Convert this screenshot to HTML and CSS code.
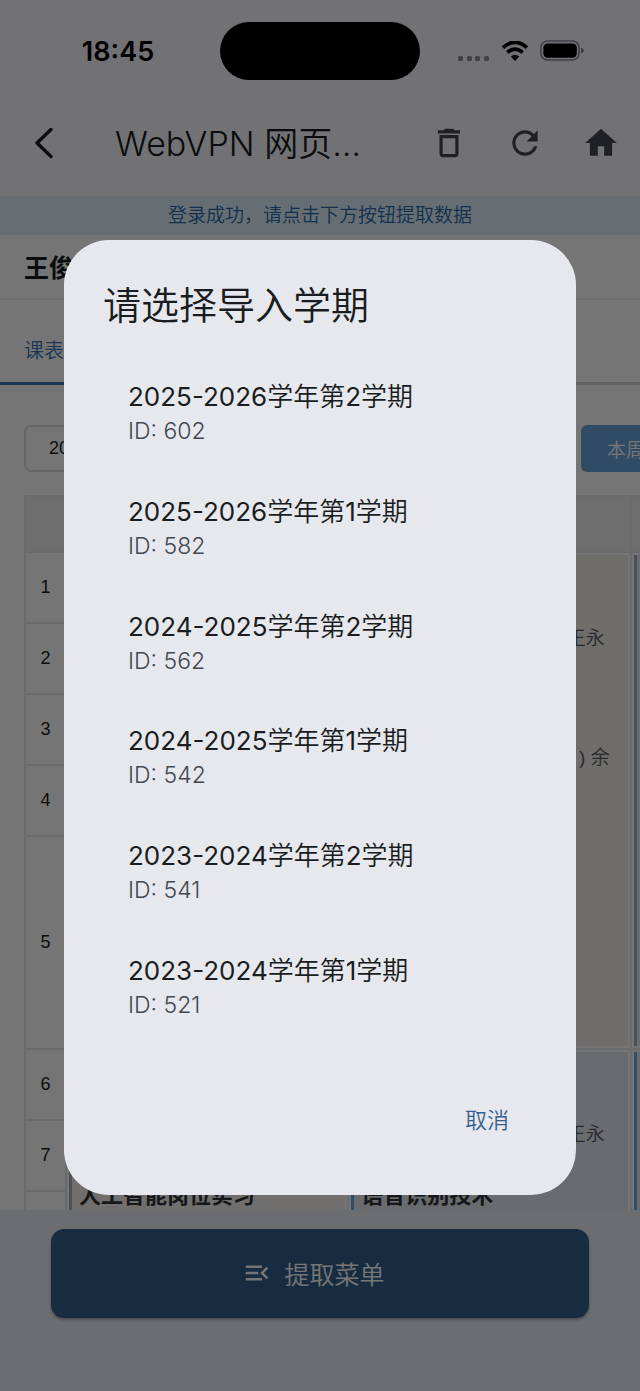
FILE: index.html
```html
<!DOCTYPE html>
<html lang="zh-CN">
<head>
<meta charset="utf-8">
<meta name="viewport" content="width=device-width, initial-scale=1">
<title>WebVPN 网页</title>
<link rel="stylesheet" href="styles.css">
</head>
<body>
<div class="app">
  <header class="top">
    <div class="status">
      <div class="status-time">18:45</div>
      <div class="island"></div>
      <div class="status-icons">
        <svg width="32" height="20" viewBox="0 0 32 20" fill="#8b9095"><rect x="0" y="15" width="5" height="5" rx="1.500"/><rect x="9" y="15" width="5" height="5" rx="1.500"/><rect x="17" y="15" width="5" height="5" rx="1.500"/><rect x="26" y="15" width="5" height="5" rx="1.500"/></svg>
        <svg width="28" height="20" viewBox="0 0 28 20"><path d="M2 6.600Q14-4 26 6.600M6.300 11.400Q14 4.800 21.700 11.400" fill="none" stroke="#000" stroke-width="3.800"/><path d="M9.800 15.600Q14 12 18.200 15.600L14 20Z"/></svg>
        <svg width="44" height="22" viewBox="0 0 44 22"><rect x="1" y="1" width="38" height="19" rx="6.500" fill="none" stroke="#8c8c95" stroke-width="1.600"/><rect x="3.400" y="3.400" width="33.400" height="14.400" rx="4.200"/><path d="M41 7.500Q44 8.500 44 10.500T41 13.500Z" fill="#8c8c95"/></svg>
      </div>
    </div>
    <div class="appbar">
      <button class="icon-btn" aria-label="返回"><svg width="38" height="38" viewBox="0 0 38 38"><path d="M26 5.500L12 19L26 32.500" fill="none" stroke="#191c20" stroke-width="3.400" stroke-linecap="round" stroke-linejoin="round"/></svg></button>
      <h1 class="appbar-title">WebVPN 网页…</h1>
      <button class="icon-btn" aria-label="删除"><svg width="38" height="38" viewBox="0 0 24 24"><path d="M6 19c0 1.100.9 2 2 2h8c1.100 0 2-.9 2-2V7H6v12zM8 9h8v10H8V9zm7.500-5l-1-1h-5l-1 1H5v2h14V4h-3.500z"/></svg></button>
      <button class="icon-btn" aria-label="刷新"><svg width="38" height="38" viewBox="0 0 24 24"><path d="M17.650 6.350C16.200 4.900 14.210 4 12 4c-4.420 0-7.990 3.580-7.990 8s3.570 8 7.990 8c3.730 0 6.840-2.550 7.730-6h-2.080c-.82 2.330-3.040 4-5.650 4-3.310 0-6-2.690-6-6s2.690-6 6-6c1.660 0 3.140.69 4.220 1.780L13 11h7V4l-2.350 2.350z"/></svg></button>
      <button class="icon-btn" aria-label="主页"><svg width="38" height="38" viewBox="0 0 24 24"><path d="M10 20v-6h4v6h5v-8h3L12 3 2 12h3v8z"/></svg></button>
    </div>
  </header>
  <p class="banner">登录成功，请点击下方按钮提取数据</p>
  <main class="web">
    <div class="student">王俊</div>
    <nav class="tabs"><a class="tab" href="#">课表</a></nav>
    <div class="filters">
      <button class="term">20</button>
      <button class="week">本周</button>
    </div>
    <div class="schedule">
      <table class="grid">
        <colgroup><col class="col-no"><col class="col-day"><col class="col-day"><col class="col-day"></colgroup>
        <thead><tr><th></th><th></th><th></th><th></th></tr></thead>
        <tbody>
          <tr><td class="no">1</td><td rowspan="5"></td>
            <td rowspan="5"><div class="card long sand"><p class="teacher">王永</p><p class="teacher second">) 余</p></div></td>
            <td rowspan="5"><div class="card long slate"></div></td></tr>
          <tr><td class="no">2</td></tr>
          <tr><td class="no">3</td></tr>
          <tr><td class="no">4</td></tr>
          <tr class="tall"><td class="no">5</td></tr>
          <tr><td class="no">6</td>
            <td rowspan="3"><div class="card stone"><p class="course">人工智能岗位实习</p></div></td>
            <td rowspan="3"><div class="card blue"><p class="teacher">王永</p><p class="course after">语音识别技术</p></div></td>
            <td rowspan="3"><div class="card blue"></div></td></tr>
          <tr><td class="no">7</td></tr>
          <tr><td class="no"></td></tr>
        </tbody>
      </table>
    </div>
  </main>
  <footer class="bottom">
    <button class="extract"><svg width="30" height="30" viewBox="0 0 24 24" fill="#fff"><path d="M3 18h13v-2H3v2zM3 13h10v-2H3v2zm0-7v2h13V6H3zm18 9.590L17.420 12 21 8.410 19.590 7l-5 5 5 5L21 15.590z"/></svg>提取菜单</button>
  </footer>
</div>
<div class="scrim">
  <section class="dialog" role="dialog" aria-modal="true" aria-labelledby="dlg">
    <h2 class="dialog-title" id="dlg">请选择导入学期</h2>
    <div class="terms">
      <button class="item"><span class="name">2025-2026学年第2学期</span><span class="id">ID: 602</span></button>
      <button class="item"><span class="name">2025-2026学年第1学期</span><span class="id">ID: 582</span></button>
      <button class="item"><span class="name">2024-2025学年第2学期</span><span class="id">ID: 562</span></button>
      <button class="item"><span class="name">2024-2025学年第1学期</span><span class="id">ID: 542</span></button>
      <button class="item"><span class="name">2023-2024学年第2学期</span><span class="id">ID: 541</span></button>
      <button class="item"><span class="name">2023-2024学年第1学期</span><span class="id">ID: 521</span></button>
    </div>
    <div class="actions"><button class="cancel">取消</button></div>
  </section>
</div>
</body>
</html>
```

FILE: styles.css
```css
* { box-sizing: border-box; }
body, h1, h2, p { margin: 0; }
body {
  font-family: Inter, "Noto Sans CJK SC DemiLight", "Noto Sans CJK SC", sans-serif;
  font-weight: 350;
  color: #191c20;
  background: #f8f9ff;
}
button { border: 0; padding: 0; background: none; font: inherit; color: inherit; }
svg { display: block; flex: none; }

.app { height: 100vh; display: flex; flex-direction: column; overflow: hidden; }
.top { background: #f8f9ff; }
.status {
  height: 90px;
  padding-top: 12px;
  display: grid;
  grid-template-columns: 1fr 200px 1fr;
  align-items: center;
}
.status-time { padding-left: 16px; text-align: center; font-size: 27px; font-weight: 600; color: #000; }
.island { height: 58px; border-radius: 29px; background: #000; }
.status-icons { display: flex; justify-content: center; align-items: center; gap: 11px; padding-right: 18px; }

.appbar { height: 106px; padding-right: 1px; display: flex; align-items: center; }
.appbar-title { flex: 1; padding: 2px 0 0 27px; font-size: 34px; font-weight: 350; line-height: 48px; white-space: nowrap; }
.icon-btn { width: 76px; height: 76px; display: grid; place-items: center; fill: #43474e; }
.icon-btn:first-child { width: 88px; }

.banner {
  background: #dfeffb;
  color: #2a6aaa;
  text-align: center;
  font-size: 19px;
  line-height: 40px;
  height: 39px;
}

.web { flex: 1; min-height: 0; overflow: hidden; background: #fff; font-family: "Liberation Sans", "Noto Sans CJK SC", sans-serif; }
.student { height: 65px; padding-left: 24px; line-height: 67px; font-size: 25px; font-weight: 700; border-bottom: 2px solid #eceef4; }
.tabs { height: 85px; padding: 16px 0 0 24px; display: flex; align-items: center; border-bottom: 3px solid #cfd3da; position: relative; }
.tab { color: #3b78b8; font-size: 20px; text-decoration: none; }
.tab::after { content: ""; position: absolute; left: 0; bottom: -3px; width: 110px; height: 3px; background: #3b78b8; }
.filters { padding: 40px 0 23px 24px; display: flex; justify-content: space-between; }
.term { width: 300px; height: 47px; border: 2px solid #dcdfe6; border-radius: 7px; padding-left: 23px; text-align: left; font-size: 18px; }
.week { width: 110px; height: 47px; margin-right: -51px; border-radius: 6px; background: #6aa5da; color: #fff; font-size: 19px; padding-left: 26px; text-align: left; }

.schedule { padding-left: 24px; overflow: hidden; }
.grid { width: 890px; table-layout: fixed; border-collapse: collapse; }
.col-no { width: 41px; }
.grid th { height: 56px; background: #efefef; }
.grid th, .grid td { border: 2px solid #e8eaee; padding: 0; }
.grid tr { height: 71px; }
.grid thead tr { height: 56px; }
.grid .tall { height: 213px; }
.grid td { vertical-align: top; }
.grid .no { text-align: center; vertical-align: middle; font-size: 18px; }
.card { height: 207px; margin: 2px; border-left: 3px solid; overflow: hidden; }
.long { height: 491px; }
.sand { background: #f0ede7; border-color: #b0a898; padding-top: 70px; }
.slate { background: #eaebf0; border-color: #a3acbd; }
.stone { background: #f5f2ee; border-color: #a8b0bc; padding-top: 128px; }
.blue { background: #e6eaf2; border-color: #66aae8; padding-top: 69px; }
.teacher { padding-right: 23px; text-align: right; font-size: 19px; line-height: 28px; color: #565c68; }
.second { padding-top: 91px; padding-right: 18px; }
.course { padding-left: 7px; font-size: 22px; line-height: 32px; font-weight: 700; color: #303338; }
.after { padding-top: 31px; }

.bottom { padding: 19px 51px 73px; background: #ebedf3; }
.extract {
  width: 100%;
  height: 89px;
  display: flex;
  align-items: center;
  justify-content: center;
  gap: 12px;
  padding: 0 13px 2px 0;
  border-radius: 13px;
  background: #36618e;
  color: #fff;
  font-size: 25px;
  box-shadow: 0 2px 3px rgba(0, 0, 0, .3);
}

.scrim {
  position: fixed;
  inset: 0;
  display: grid;
  align-items: center;
  padding: 112px 10% 68px;
  background: rgba(0, 0, 0, .54);
}
.dialog { padding: 38px 39px; border-radius: 45px; background: #e6e8ee; }
.dialog-title { font-size: 38px; line-height: 54px; font-weight: 350; }
.terms { height: 688px; margin-top: 23px; display: grid; grid-auto-rows: 1fr; }
.item { padding: 0 25px; display: flex; flex-direction: column; justify-content: center; text-align: left; font-weight: 400; }
.name { font-size: 26px; line-height: 38px; }
.id { font-size: 23px; font-weight: 350; line-height: 30px; color: #43474e; }
.actions { margin-top: 37px; display: flex; justify-content: flex-end; }
.cancel { padding: 0 28px 2px; height: 77px; font-size: 22px; color: #36618e; }
```
